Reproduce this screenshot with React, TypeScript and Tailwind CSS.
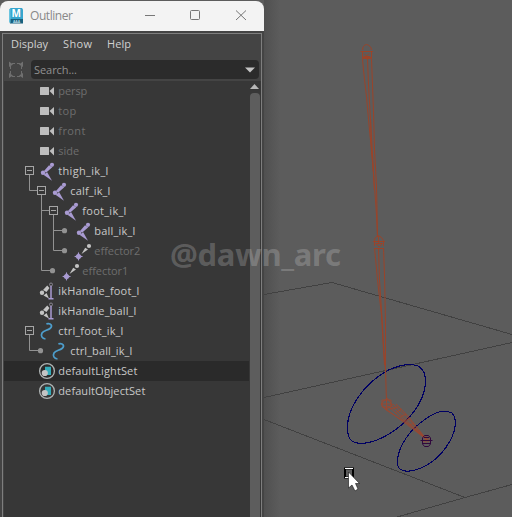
import React from "react";

type IconKind = "camera" | "joint" | "effector" | "handle" | "curve" | "set";

interface Row {
  name: string;
  icon: IconKind;
  indent: number;
  width: number;
  dim?: boolean;
  selected?: boolean;
  box?: number;
  dot?: number;
  lines?: string;
}

const rows: Row[] = [
  { name: "persp", icon: "camera", indent: 0, width: 29, dim: true },
  { name: "top", icon: "camera", indent: 0, width: 18, dim: true },
  { name: "front", icon: "camera", indent: 0, width: 27, dim: true },
  { name: "side", icon: "camera", indent: 0, width: 21, dim: true },
  { name: "thigh_ik_l", icon: "joint", indent: 0, width: 50, box: 29.5, lines: "M29.5 14V20" },
  { name: "calf_ik_l", icon: "joint", indent: 1, width: 40, box: 41.5, lines: "M29.5 0V9.5H37M41.5 14V20" },
  { name: "foot_ik_l", icon: "joint", indent: 2, width: 44, box: 53.5, lines: "M41.5 0V20M41.5 9.5H49M53.5 14V20" },
  { name: "ball_ik_l", icon: "joint", indent: 3, width: 41, dot: 64.5, lines: "M41.5 0V20M53.5 0V20M53.5 9.5H64" },
  { name: "effector2", icon: "effector", indent: 3, width: 46, dim: true, dot: 64.5, lines: "M41.5 0V20M53.5 0V9.5H64" },
  { name: "effector1", icon: "effector", indent: 2, width: 46, dim: true, dot: 52.5, lines: "M41.5 0V9.5H52" },
  { name: "ikHandle_foot_l", icon: "handle", indent: 0, width: 81 },
  { name: "ikHandle_ball_l", icon: "handle", indent: 0, width: 78 },
  { name: "ctrl_foot_ik_l", icon: "curve", indent: 0, width: 65, box: 29.5, lines: "M29.5 14V20" },
  { name: "ctrl_ball_ik_l", icon: "curve", indent: 1, width: 62, dot: 40.5, lines: "M29.5 0V9.5H40" },
  { name: "defaultLightSet", icon: "set", indent: 0, width: 79, selected: true },
  { name: "defaultObjectSet", icon: "set", indent: 0, width: 87 },
];

function Glyph({ kind }: { kind: IconKind }) {
  switch (kind) {
    case "camera":
      return (
        <g fill="#bdbdbd">
          <rect x="2" y="6" width="9" height="8" rx=".5" />
          <path d="M11.5 10L16 6V14.5Z" />
        </g>
      );
    case "joint":
      return (
        <g fill="#a99bd2">
          <circle cx="14" cy="3.8" r="2.1" />
          <circle cx="5" cy="11.7" r="2.2" />
          <path d="M14.3 6.2L11 4.3L6 10L8 11.8Z" />
          <path d="M5.5 13.8L9.2 11.3L14 19.8Z" />
        </g>
      );
    case "effector":
      return (
        <g>
          <circle cx="15" cy="5" r="2.1" fill="#c4c4c4" />
          <path d="M7.5 13L11.2 6.7L14 8.6Z" fill="#c4c4c4" />
          <path d="M4.5 10.8L5.8 14.2L9.2 15.5L5.8 16.8L4.5 20L3.2 16.8L0 15.5L3.2 14.2Z" fill="#a99bd2" />
          <circle cx="4.5" cy="15.5" r="2.5" fill="#a99bd2" />
        </g>
      );
    case "handle":
      return (
        <g>
          <circle cx="4" cy="11.7" r="2.2" fill="#c4c4c4" />
          <path d="M5 9L9.2 4.5L11.5 7L8.5 11Z" fill="#c4c4c4" />
          <path d="M5.500 14.5L8.5 12L11 17.5Z" fill="#c4c4c4" />
          <circle cx="13" cy="3.5" r="1.5" fill="none" stroke="#8a8792" />
          <path d="M13 5V18M10.500 17.8H15.500" fill="none" stroke="#a99bd2" strokeWidth="1.5" />
        </g>
      );
    case "curve":
      return (
        <path
          d="M8.4 2.9C13 1.5 15 5 12 7.5C9.5 9.5 5.5 9.5 4 12C2.5 15 4 17.5 7.5 18"
          fill="none"
          stroke="#4d9dcb"
          strokeWidth="1.7"
        />
      );
    case "set":
      return (
        <g>
          <circle cx="9" cy="10" r="7.4" fill="none" stroke="#aeb3b3" strokeWidth="1.3" />
          <path d="M7 5.8H13V14H9V10H7Z" fill="#35abb9" />
          <circle cx="6.8" cy="12" r="3.1" fill="#c4c4c4" />
        </g>
      );
  }
}

function TreeRow({ row }: { row: Row }) {
  const start = row.indent * 12;
  const iconX = 38 + start;
  return (
    <div className={`flex h-5 w-[245px] items-center ${row.selected ? "bg-[#2a2a2a]" : ""}`}>
      <svg className="h-5 shrink-0 overflow-visible" width={54 + start} viewBox={`4 0 ${54 + start} 20`}>
        {row.lines && <path d={row.lines} fill="none" stroke="#929292" />}
        {row.box && (
          <g fill="none" stroke="#a5a5a5">
            <rect x={row.box - 4} y="5.5" width="8" height="8" fill="#373737" />
            <path d={`M${row.box - 2.5} 9.5h5`} />
          </g>
        )}
        {row.dot && <circle cx={row.dot} cy="9.7" r="2.6" fill="#929292" />}
        <g transform={`translate(${iconX} 0)`}>
          <Glyph kind={row.icon} />
        </g>
      </svg>
      <Label text={row.name} width={row.width} color={row.dim ? "#6e6e6e" : "#c8c8c8"} offset={0.3} />
    </div>
  );
}

interface LabelProps {
  text: string;
  width: number;
  color: string;
  size?: number;
  offset?: number;
}

function Label({ text, width, color, size = 11, offset = 0 }: LabelProps) {
  return (
    <svg className="h-5 shrink-0 overflow-visible" width={width} viewBox={`0 0 ${width} 20`}>
      <text x={offset} y="14" fontSize={size} fill={color} textLength={width} className="font-['Open_Sans','Noto_Sans',sans-serif]">
        {text}
      </text>
    </svg>
  );
}

function Viewport() {
  return (
    <svg className="absolute inset-0" width="512" height="517" viewBox="0 0 512 517" fill="none">
      <g stroke="#414141" shapeRendering="crispEdges">
        <path d="M264 294.5L332 282.5L512 334.5M264 397.5L512 342.5M264 419.5L465 497.5L512 484.5M465 497.5L397 517" />
      </g>
      <g stroke="#000064" strokeWidth="1.1" shapeRendering="crispEdges">
        <path d="M347.5 428C347 407 365 384 385 372C397 365 410 363 418 366C424 369 426 375 425.500 384C424 402 408 423 389 434C374 443 359 446 352 441C348 438 347.500 434 347.500 428Z" />
        <path d="M397.500 463C397 447 410 429 427 418C437 411 446 410 452 413C456 417 456 423 454.500 430C450 446 436 462 421 468C411 472 403 472 399 468C397.500 466 397.500 465 397.500 463Z" />
      </g>
      <g stroke="#9a442a">
        <path d="M360.500 51.500H373M362.500 50C362.500 47 364 45 366.500 44.500C369 45 371.500 47 371.500 50M362.500 52V58.500H371.500V52M362.500 57.500H371.500M364 53.500L366.500 56L369 53.500M363.500 56.500H370" />
        <path d="M362.500 59L363.500 70L366.500 97L369.500 130L372.500 160L374.500 190M367.500 59L368.500 85L370.500 119L371.500 152L373.500 172M371.500 59L372.500 85L373.500 112L374.500 150L376.500 186L377.500 235M374.500 186L376.500 215L377.500 237M370.500 119L374.500 190" />
        <path d="M373 241.500H385M374.500 246V239L376.500 236.500L378.500 235.500L381.500 237.500L383.500 240.500V246M374.500 248.500H383.500M375.500 243.500H382.500M376.500 244L379 247L382 244M378.500 236V243" />
        <path d="M374.500 248L375.500 258L377.500 280L381.500 315L383.500 350L385.500 370M378.500 248L379.500 280L381.500 310L382.500 325L384.500 365M383.500 248L384.500 275L385.500 325L385.500 370L386.500 402" />
      </g>
      <g stroke="#9c472f" strokeWidth=".9">
        <path d="M381 404L387 398L392.500 405L386 410ZM382 400H391V407H382ZM381 404H392M386.500 398V410" />
        <path d="M386 410L410 425L427 440M383 407L409 426L427 440M393 404L407 417L427 440M396 404L408 416L427 440M388 406L427 440M391 405L427 440" />
        <path d="M390 409L398 407M395 413L402 409M400 417L406 414M405 421L410 418M410 425L414 423M423 437L429 442M426 436V444M423 442L430 438" />
      </g>
      <g stroke="#30083d">
        <path d="M424.500 435.500H428.500L430.500 438V444L428.500 446.500H424.500L422.500 444V438ZM420.500 440.500H432.500M423 443.500H430M424 437.500H429" />
      </g>
      <rect x="345" y="468.500" width="8" height="9" stroke="#000" strokeWidth="2" />
      <path d="M345 468.500H353M345 477.500H353" stroke="#fff" />
      <path d="M348.500 472V488L352 485L355 491L358 489L355.500 483.500H359.500Z" fill="#fff" stroke="#111" strokeWidth=".6" />
    </svg>
  );
}

function TitleBar() {
  return (
    <div className="flex h-[30px] w-[264px] items-center rounded-t-lg bg-[#f3f3f3] text-[#858585]">
      <svg className="ml-2 shrink-0" width="17" height="18" viewBox="0 0 17 18">
        <path d="M2.500 1H14L15 2.500V13H1V3Z" fill="#36a5ce" />
        <path d="M1 12H15V16.500H2Z" fill="#18617e" />
        <path d="M1 3L2.500 1V16L1 15Z" fill="#6bc4df" />
        <text x="8.300" y="10" textAnchor="middle" fontSize="10" fontWeight="700" fill="#fff" fontFamily="Open Sans, sans-serif">M</text>
        <text x="8.500" y="15.500" textAnchor="middle" fontSize="3.500" fontWeight="700" fill="#b9dce7" fontFamily="Open Sans, sans-serif">AAA</text>
      </svg>
      <div className="ml-[5px] h-5"><Label text="Outliner" width={43} color="#888888" size={12} /></div>
      <svg className="ml-auto shrink-0" width="119" height="30" viewBox="145 1 119 30" fill="none" stroke="#777">
        <path d="M145 15.500H155" />
        <rect x="190.500" y="10.500" width="9" height="9" rx="1" />
        <path d="M236 10.500L246 20M246 10.500L236 20" />
      </svg>
    </div>
  );
}

export default function App() {
  return (
    <div className="relative h-[517px] w-[512px] overflow-hidden bg-[#5c5c5c]">
      <div className="absolute top-0 left-[264px] h-full w-4 bg-linear-to-r from-[#505050] to-[#5c5c5c]" />
      <Viewport />
      <div className="relative flex h-full w-[264px] flex-col pt-px">
        <TitleBar />
        <div className="flex flex-1 flex-col bg-[#444444] pt-0.5 pr-0.5 pl-0.5">
          <div className="flex flex-1 flex-col border-x border-t border-[#7e7e7e]">
            <div className="flex h-[26px] pl-2">
              <Label text="Display" width={37} color="#d0d0d0" />
              <div className="ml-[15px]"><Label text="Show" width={29} color="#d0d0d0" /></div>
              <div className="ml-[15px]"><Label text="Help" width={24} color="#d0d0d0" /></div>
            </div>
            <div className="flex h-[19px] items-center pr-0.5">
              <svg className="ml-[5px] shrink-0" width="16" height="18" viewBox="0 0 16 18" fill="#707070">
                <path d="M4 2.500H12M4 15.500H12M2.500 5V13M13.500 5V13" stroke="#6e6e6e" strokeDasharray="3 2" fill="none" />
                <path d="M1 .5L5 3.500L1 6ZM15 .5L11 3.500L15 6ZM1 12L5 14.500L1 17ZM15 12L11 14.500L15 17Z" />
              </svg>
              <div className="ml-[7px] flex h-[19px] flex-1 items-center justify-between rounded-sm bg-[#2b2b2b] pr-1 pl-[3px]">
                <Label text="Search..." width={43} color="#919191" />
                <svg width="10" height="6" viewBox="0 0 10 6"><path d="M0 .5H10L5 5.500Z" fill="#c4c4c4" /></svg>
              </div>
            </div>
            <div className="mt-0.5 ml-px flex flex-1 bg-[#373737]">
              <div className="w-[246px]">{rows.map((row) => <TreeRow key={row.name} row={row} />)}</div>
              <div className="flex w-[10px] flex-col">
                <svg className="shrink-0" width="10" height="12" viewBox="0 0 10 12"><path d="M0 8L4.500 3L9 8Z" fill="#b8b8b8" /></svg>
                <div className="flex-1 rounded-t-[4px] bg-[#5d5d5d]" />
              </div>
            </div>
          </div>
        </div>
      </div>
      <svg className="pointer-events-none absolute inset-0" width="512" height="517" viewBox="0 0 512 517">
        <text x="170" y="266" textLength="171" fontSize="31" fontWeight="700" fill="#ffffff" fillOpacity=".2" className="font-['Noto_Sans','Open_Sans',sans-serif]">@dawn_arc</text>
      </svg>
    </div>
  );
}
